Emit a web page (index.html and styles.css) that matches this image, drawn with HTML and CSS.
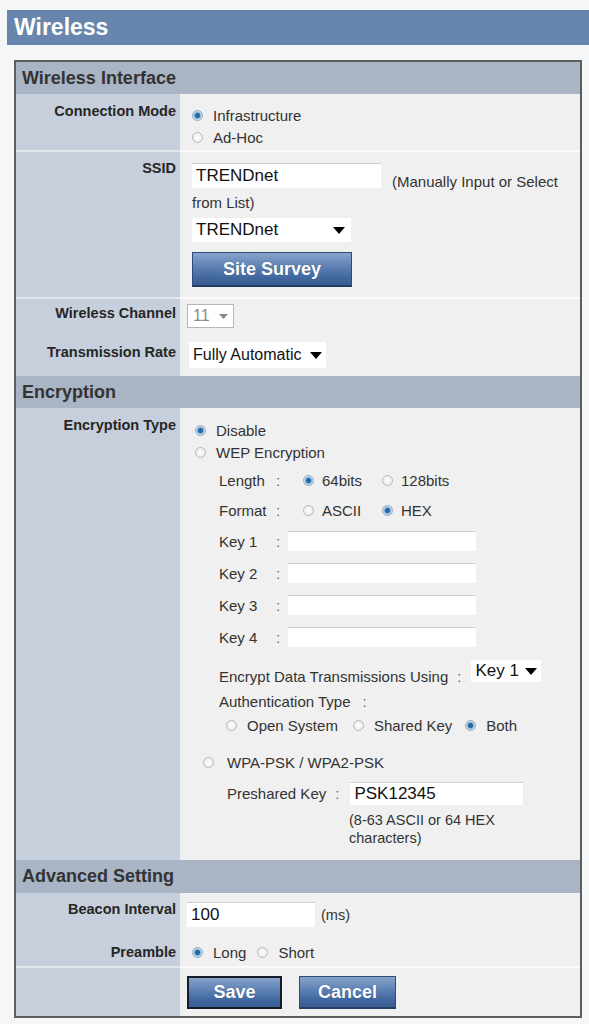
FILE: index.html
```html
<!DOCTYPE html>
<html>
<head>
<meta charset="utf-8">
<title>Wireless</title>
<link rel="stylesheet" href="styles.css">
</head>
<body>
<div class="screen">
  <div class="titlebar">Wireless</div>
  <div class="panel">
    <div class="sec-head">Wireless Interface</div>

    <div class="row r-mode">
      <div class="lbl">Connection Mode</div>
      <div class="val">
        <div class="opt-line"><span class="radio on"></span>Infrastructure</div>
        <div class="opt-line"><span class="radio"></span>Ad-Hoc</div>
      </div>
    </div>

    <div class="row sep r-ssid">
      <div class="lbl">SSID</div>
      <div class="val">
        <div class="ssid-line"><span class="textbox tb-ssid">TRENDnet</span><span class="hint">(Manually Input or Select</span></div>
        <div class="hint2">from List)</div>
        <div class="select sel-ssid"><span>TRENDnet</span><svg class="arrow" width="12" height="7" viewBox="0 0 12 7"><path d="M0 0H12L6 7Z" fill="#000"/></svg></div>
        <button class="btn btn-survey">Site Survey</button>
      </div>
    </div>

    <div class="row sep r-chan">
      <div class="lbl">Wireless Channel</div>
      <div class="val">
        <div class="select sel-chan"><span>11</span><svg class="arrow" width="9" height="5" viewBox="0 0 9 5"><path d="M0 0H9L4.5 5Z" fill="#8a8a8a"/></svg></div>
      </div>
    </div>

    <div class="row r-rate">
      <div class="lbl">Transmission Rate</div>
      <div class="val">
        <div class="select sel-rate"><span>Fully Automatic</span><svg class="arrow" width="12" height="7" viewBox="0 0 12 7"><path d="M0 0H12L6 7Z" fill="#000"/></svg></div>
      </div>
    </div>

    <div class="sec-head">Encryption</div>

    <div class="row r-enc">
      <div class="lbl">Encryption Type</div>
      <div class="val">
        <div class="opt-line"><span class="radio on"></span>Disable</div>
        <div class="opt-line"><span class="radio"></span>WEP Encryption</div>

        <div class="wep">
          <div class="wep-grid">
            <span class="wl">Length</span><span class="wc">:</span>
            <div class="wopts"><span class="wopt"><span class="radio on"></span>64bits</span><span class="wopt"><span class="radio"></span>128bits</span></div>

            <span class="wl">Format</span><span class="wc">:</span>
            <div class="wopts"><span class="wopt"><span class="radio"></span>ASCII</span><span class="wopt"><span class="radio on"></span>HEX</span></div>

            <span class="wl key">Key 1</span><span class="wc key">:</span><span class="textbox tb-key"></span>
            <span class="wl key">Key 2</span><span class="wc key">:</span><span class="textbox tb-key"></span>
            <span class="wl key">Key 3</span><span class="wc key">:</span><span class="textbox tb-key"></span>
            <span class="wl key">Key 4</span><span class="wc key">:</span><span class="textbox tb-key"></span>
          </div>

          <div class="encrypt-line">
            <span class="enc-text">Encrypt Data Transmissions Using</span><span class="enc-colon">:</span>
            <div class="select sel-key"><span>Key 1</span><svg class="arrow" width="12" height="7" viewBox="0 0 12 7"><path d="M0 0H12L6 7Z" fill="#000"/></svg></div>
          </div>
          <div class="auth-line">Authentication Type<span class="auth-colon">:</span></div>
          <div class="auth-opts">
            <span class="aopt a1"><span class="radio"></span>Open System</span>
            <span class="aopt a2"><span class="radio"></span>Shared Key</span>
            <span class="aopt"><span class="radio on"></span>Both</span>
          </div>
        </div>

        <div class="wpa-line"><span class="radio"></span>WPA-PSK / WPA2-PSK</div>
        <div class="psk-line"><span>Preshared Key</span><span class="psk-colon">:</span><span class="textbox tb-psk">PSK12345</span></div>
        <div class="psk-hint">(8-63 ASCII or 64 HEX<br>characters)</div>
      </div>
    </div>

    <div class="sec-head sec-adv">Advanced Setting</div>

    <div class="row r-beacon">
      <div class="lbl">Beacon Interval</div>
      <div class="val">
        <span class="textbox tb-beacon">100</span><span class="ms">(ms)</span>
      </div>
    </div>

    <div class="row r-pre">
      <div class="lbl">Preamble</div>
      <div class="val">
        <span class="popt"><span class="radio on"></span>Long</span>
        <span class="popt"><span class="radio"></span>Short</span>
      </div>
    </div>

    <div class="row sep r-btns">
      <div class="lbl"></div>
      <div class="val">
        <button class="btn btn-save">Save</button>
        <button class="btn btn-cancel">Cancel</button>
      </div>
    </div>
  </div>
</div>
</body>
</html>
```

FILE: styles.css
```css
* { box-sizing: border-box; }

body {
  margin: 0;
  background: #f4f6f8;
  font-family: "Liberation Sans", Arial, sans-serif;
  color: #333;
}

.screen {
  padding: 10px 0 0 7px;
}

.titlebar {
  height: 35px;
  background: #6886ad;
  color: #fff;
  font-weight: bold;
  font-size: 23px;
  line-height: 35px;
  padding-left: 7px;
}

.panel {
  margin: 15px 7px 0 7px;
  border: 2px solid #5e5e5e;
  background: #f0f0f0;
}

.sec-head {
  height: 32px;
  background: #a9b4c4;
  color: #333;
  font-weight: bold;
  font-size: 18px;
  line-height: 32px;
  padding-left: 6px;
}

.sec-adv { height: 33px; line-height: 33px; }

.row {
  display: grid;
  grid-template-columns: 164px 1fr;
}

.lbl {
  background: #c6cfdb;
  text-align: right;
  padding-right: 4px;
  font-weight: bold;
  font-size: 14.5px;
  line-height: 16px;
  color: #262626;
}

.val {
  background: #f0f0f0;
  font-size: 15px;
  color: #333;
}

.row.sep > .lbl { border-top: 2px solid #e2e7ed; }
.row.sep > .val { border-top: 2px solid #fafafa; }

/* radios */
.radio {
  display: inline-block;
  flex: none;
  width: 11px;
  height: 11px;
  border-radius: 50%;
  border: 1px solid #b3b8be;
  background: radial-gradient(circle, #ffffff 0, #e6e6e6 100%);
  margin-right: 10px;
}
.radio.on {
  border-color: #8ea9c1;
  background: radial-gradient(circle, #1f5f97 0, #2f73ab 2.2px, #a6c6e0 3.4px, #eef3f7 5px);
}

.opt-line {
  display: flex;
  align-items: center;
  height: 22px;
}

/* text boxes and selects */
.textbox {
  display: inline-flex;
  align-items: center;
  background: #fff;
  border-top: 1px solid #cfcfcf;
  color: #111;
  font-size: 16px;
  padding-left: 4px;
}

.select {
  display: flex;
  align-items: center;
  justify-content: space-between;
  background: #fff;
  color: #111;
  font-size: 16px;
  padding: 0 4px;
}
.select .arrow { flex: none; }

/* connection mode */
.r-mode .lbl { padding-top: 9px; }
.r-mode .val { padding: 10px 0 2px 12px; }

/* ssid */
.r-ssid .lbl { padding-top: 8px; }
.r-ssid .val { padding: 11px 0 10px 12px; }
.ssid-line { display: flex; align-items: flex-start; }
.tb-ssid { width: 189px; height: 25px; font-size: 17px; }
.hint { margin: 10px 0 0 11px; line-height: 18px; font-size: 15px; }
.hint2 { margin-top: 3px; line-height: 18px; }
.sel-ssid { width: 159px; height: 24px; margin-top: 6px; font-size: 17px; padding-right: 6px; }

.btn {
  display: flex;
  align-items: center;
  justify-content: center;
  font-family: "Liberation Sans", Arial, sans-serif;
  font-weight: bold;
  font-size: 18px;
  color: #fff;
  background: linear-gradient(#86a3cb 0%, #5c7fb2 45%, #4268a0 75%, #3a5d92 100%);
  border: 1px solid #2e4b78;
  border-bottom: 2px solid #243d63;
  text-shadow: 0 0 1px rgba(20,40,80,0.5);
  padding: 0;
}
.btn-survey { width: 160px; height: 35px; margin-top: 10px; }

/* channel / rate */
.r-chan .lbl { padding-top: 6px; }
.r-chan .val { padding: 5px 0 7px 7px; }
.sel-chan {
  width: 47px;
  height: 24px;
  border: 1px solid #b8b8b8;
  color: #8a8a8a;
  font-size: 16px;
  padding: 0 5px;
}
.r-rate .lbl { padding-top: 9px; }
.r-rate .val { padding: 7px 0 8px 9px; }
.sel-rate { width: 137px; height: 26px; padding-right: 4px; }

/* encryption */
.r-enc .lbl { padding-top: 9px; }
.r-enc .val { padding: 11px 0 13px 15px; }

.wep { margin: 2px 0 0 24px; }
.wep-grid {
  display: grid;
  grid-template-columns: 52px 17px auto;
  grid-template-rows: 30px 30px 32px 32px 32px 32px;
  align-items: center;
}
.wc { padding-left: 5px; color: #666; }
.wopts { display: flex; align-items: center; padding-left: 15px; }
.wopt { display: flex; align-items: center; width: 79px; }
.wopt .radio { margin-right: 8px; }
.tb-key { width: 188px; height: 20px; }

.encrypt-line { display: flex; align-items: flex-start; margin-top: 7px; }
.enc-text { margin-top: 8px; line-height: 18px; }
.enc-colon { margin: 8px 0 0 9px; line-height: 18px; color: #666; }
.sel-key { width: 70px; height: 22px; margin-left: 10px; font-size: 17px; }

.auth-line { margin-top: 7px; line-height: 18px; }
.auth-colon { margin-left: 12px; color: #666; }
.auth-opts { display: flex; align-items: center; margin-top: 5px; height: 18px; padding-left: 7px; }
.aopt { display: flex; align-items: center; }
.aopt .radio { margin-right: 10px; }
.a1 { margin-right: 15px; }
.a2 { margin-right: 13px; }

.wpa-line { display: flex; align-items: center; height: 18px; margin: 19px 0 0 8px; }
.wpa-line .radio { margin-right: 13px; }

.psk-line { display: flex; align-items: center; margin: 11px 0 0 32px; height: 23px; }
.psk-colon { margin-left: 9px; color: #666; }
.tb-psk { width: 173px; height: 23px; margin-left: 11px; font-size: 17px; }
.psk-hint { margin: 6px 0 0 154px; line-height: 18px; font-size: 14.5px; }

/* advanced */
.r-beacon .lbl { padding-top: 8px; }
.r-beacon .val { padding: 9px 0 8px 7px; display: flex; align-items: center; }
.tb-beacon { width: 128px; height: 25px; font-size: 17px; }
.ms { margin-left: 6px; font-size: 14.5px; }

.r-pre .lbl { padding-top: 9px; }
.r-pre .val { padding: 6px 0 3px 12px; display: flex; align-items: center; height: 31px; }
.popt { display: flex; align-items: center; margin-right: 11px; }

.r-btns .val { padding: 8px 0 7px 7px; display: flex; }
.btn-save { width: 95px; height: 33px; border: 2px solid #151d2a; }
.btn-cancel { width: 97px; height: 33px; margin-left: 17px; }
```
